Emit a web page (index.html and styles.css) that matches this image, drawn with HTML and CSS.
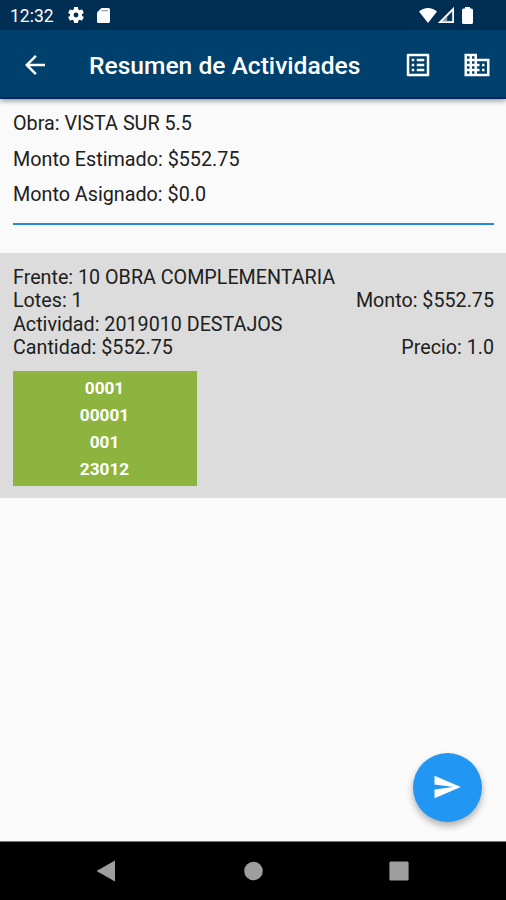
FILE: index.html
```html
<!DOCTYPE html>
<html lang="es">
<head>
<meta charset="utf-8">
<title>Resumen de Actividades</title>
<link rel="stylesheet" href="styles.css">
</head>
<body>
<div class="status">
  <span class="clock">12:32</span>
  <svg class="gear" viewBox="2 2 20 20"><path fill-rule="evenodd" d="M19.43 12.98c.04-.32.07-.64.07-.98s-.03-.66-.07-.98l2.11-1.65c.19-.15.24-.42.12-.64l-2-3.46c-.12-.22-.39-.3-.61-.22l-2.49 1c-.52-.4-1.08-.73-1.69-.98l-.38-2.65A.49.49 0 0 0 14 2h-4c-.25 0-.46.18-.49.42l-.38 2.65c-.61.25-1.17.59-1.69.98l-2.49-1c-.23-.09-.49 0-.61.22l-2 3.46c-.13.22-.07.49.12.64l2.11 1.65c-.04.32-.07.65-.07.98s.03.66.07.98l-2.11 1.65c-.19.15-.24.42-.12.64l2 3.46c.12.22.39.3.61.22l2.49-1c.52.4 1.08.73 1.69.98l.38 2.65c.03.24.24.42.49.42h4c.25 0 .46-.18.49-.42l.38-2.65c.61-.25 1.17-.59 1.69-.98l2.49 1c.23.09.49 0 .61-.22l2-3.46c.12-.22.07-.49-.12-.64zM12 15a3 3 0 1 1 0-6 3 3 0 0 1 0 6z"/></svg>
  <svg class="sd" viewBox="0 0 13 15"><path d="M4.500 0H11.500Q13 0 13 1.500V13.500Q13 15 11.500 15H1.500Q0 15 0 13.500V4.500z"/><path class="sd-slots" d="M4.500 2h6.500v1.300H4.500z"/></svg>
  <span class="grow"></span>
  <svg class="wifi" viewBox="0 0 18 15"><path d="M0 3.500Q4 0 9 0t9 3.500L9 15z"/></svg>
  <svg class="signal" viewBox="0 0 16 16"><path fill-rule="evenodd" d="M16 0v16H0zM14.300 4.200 4.300 14.200h10z"/><path class="signal-fill" d="M8.800 9.700v4.500H4.300z"/></svg>
  <svg class="battery" viewBox="0 0 11 17"><path d="M3 0h5v1.500h1.500Q11 1.500 11 3v12.500Q11 17 9.500 17h-8Q0 17 0 15.500V3Q0 1.500 1.500 1.500H3z"/></svg>
</div>
<header class="bar">
  <svg class="icon back" viewBox="0 0 24 24"><path d="M20 11H7.830l5.590-5.590L12 4l-8 8 8 8 1.410-1.410L7.830 13H20z"/></svg>
  <h1>Resumen de Actividades</h1>
  <svg class="icon list" viewBox="0 0 24 24"><path fill-rule="evenodd" d="M19 5v14H5V5h14m1.100-2H3.900c-.5 0-.9.400-.9.900v16.200c0 .4.400.9.900.9h16.200c.4 0 .9-.5.9-.9V3.900c0-.5-.5-.9-.9-.9zM11 7h6v2h-6zm0 4h6v2h-6zm0 4h6v2h-6zM7 7h2v2H7zm0 4h2v2H7zm0 4h2v2H7z"/></svg>
  <svg class="icon domain" viewBox="0 0 24 24"><path d="M12 7V3H2v18h20V7H12zM6 19H4v-2h2v2zm0-4H4v-2h2v2zm0-4H4V9h2v2zm0-4H4V5h2v2zm4 12H8v-2h2v2zm0-4H8v-2h2v2zm0-4H8V9h2v2zm0-4H8V5h2v2zm10 12h-8v-2h2v-2h-2v-2h2v-2h-2V9h8v10zm-2-8h-2v2h2v-2zm0 4h-2v2h2v-2z"/></svg>
</header>
<main>
  <section class="summary">
    <p>Obra: VISTA SUR 5.5</p>
    <p>Monto Estimado: $552.75</p>
    <p>Monto Asignado: $0.0</p>
  </section>
  <section class="card">
    <div class="row"><span>Frente: 10 OBRA COMPLEMENTARIA</span></div>
    <div class="row"><span>Lotes: 1</span><span>Monto: $552.75</span></div>
    <div class="row"><span>Actividad: 2019010 DESTAJOS</span></div>
    <div class="row"><span>Cantidad: $552.75</span><span>Precio: 1.0</span></div>
    <div class="lot"><span>0001</span><span>00001</span><span>001</span><span>23012</span></div>
  </section>
  <button class="fab" aria-label="Enviar"><svg class="icon" viewBox="0 0 24 24"><path d="M2.010 21 23 12 2.010 3 2 10l15 2-15 2z"/></svg></button>
</main>
<nav class="nav">
  <svg viewBox="0 0 20 22"><path d="M19 .5v21L.5 11z"/></svg>
  <svg viewBox="0 0 20 22"><circle cx="10.500" cy="11" r="9.300"/></svg>
  <svg viewBox="0 0 20 22"><rect x=".4" y="1.400" width="19.200" height="19.200" rx="1.500"/></svg>
</nav>
</body>
</html>
```

FILE: styles.css
```css
* { box-sizing: border-box; }
body {
  margin: 0;
  height: 900px;
  display: flex;
  flex-direction: column;
  overflow: hidden;
  background: #fafafa;
  color: #202020;
  font-family: Roboto, "Liberation Sans", sans-serif;
}
svg { display: block; flex: none; fill: #fff; }
.status {
  height: 30px;
  flex: none;
  display: flex;
  align-items: center;
  padding: 0 33px 0 10px;
  background: #002f53;
  color: #fff;
}
.clock { width: 58px; padding-top: 2px; font-size: 17.500px; line-height: 30px; }
.gear { width: 16px; height: 16px; }
.sd { width: 13px; height: 15px; margin-left: 13px; }
.sd-slots { fill: #9aa9b5; }
.grow { flex: 1; }
.wifi { width: 18px; height: 15px; }
.signal { width: 16px; height: 16px; margin: 0 8px 0 1px; stroke: #fff; stroke-width: .3; }
.signal-fill { fill: #8496a8; }
.battery { width: 11px; height: 17px; }
.bar {
  height: 69px;
  flex: none;
  display: flex;
  align-items: center;
  padding: 2px 14px 0 20px;
  background: #00406d;
  border-bottom: 2px solid #002563;
  box-shadow: 0 2px 5px rgba(0, 0, 0, .4);
  color: #fff;
  z-index: 1;
}
.icon { width: 30px; height: 30px; }
h1 {
  flex: 1;
  margin: 0 0 0 39px;
  padding-top: 3px;
  font-size: 24.600px;
  font-weight: 500;
  line-height: 30px;
  white-space: nowrap;
}
.domain { margin-left: 29px; }
main { flex: 1; position: relative; }
.summary {
  height: 126px;
  margin: 0 12px 28px 13px;
  padding-top: 7px;
  border-bottom: 2px solid #2389dc;
}
.summary p { margin: 0; font-size: 19.750px; line-height: 35.600px; }
.card { height: 245px; padding: 13px 12px 0 13px; background: #dcdcdc; }
.row {
  display: flex;
  justify-content: space-between;
  font-size: 19.720px;
  line-height: 23.250px;
}
.lot {
  width: 184px;
  height: 115px;
  margin-top: 12px;
  padding: 4px 1px 0 0;
  display: flex;
  flex-direction: column;
  align-items: center;
  background: #8cb43e;
  color: #fff;
  font-size: 17.200px;
  font-weight: 700;
  line-height: 27px;
}
.fab {
  position: absolute;
  right: 24px;
  bottom: 19px;
  width: 69px;
  height: 69px;
  padding: 0;
  border: 0;
  border-radius: 50%;
  display: grid;
  place-items: center;
  background: #2196f3;
  box-shadow: 0 4px 7px rgba(0, 0, 0, .3);
}
.fab .icon { margin: -1px 0 0 -1px; }
.nav {
  height: 59px;
  flex: none;
  display: flex;
  align-items: center;
  justify-content: space-between;
  padding: 0 97px 1px 96px;
  background: #000;
  border-top: 1px solid #777;
}
.nav svg { width: 20px; height: 22px; fill: #9e9e9e; }
```
